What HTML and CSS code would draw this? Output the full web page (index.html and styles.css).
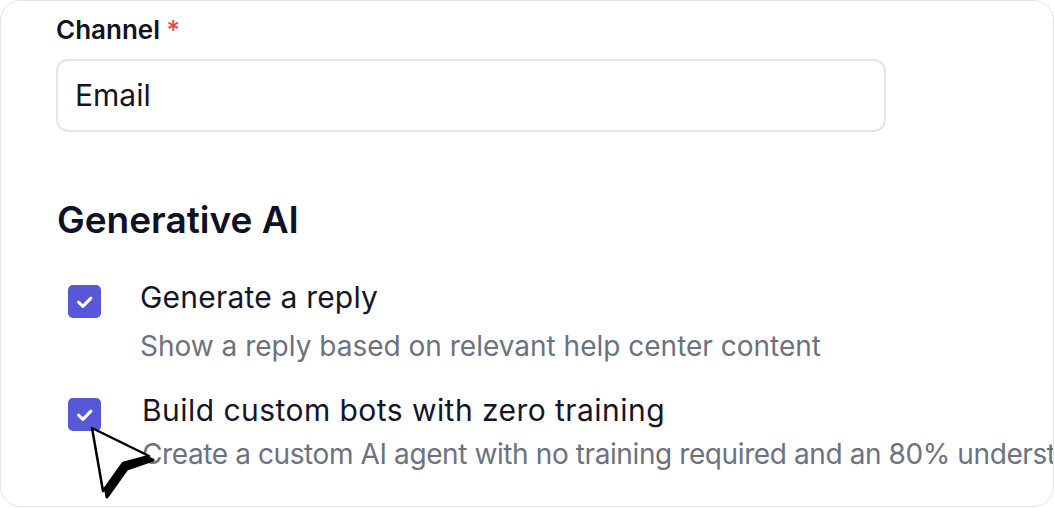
FILE: index.html
```html
<!DOCTYPE html>
<html>
<head>
<meta charset="utf-8">
<link rel="stylesheet" href="styles.css">
</head>
<body>
<div class="card">
  <div class="field">
    <div class="label">Channel <span class="req">*</span></div>
    <div class="input">Email</div>
  </div>
  <h2 class="section">Generative AI</h2>
  <div class="option">
    <span class="check"><svg viewBox="0 0 33 33" width="33" height="33"><path d="M10.5 17.2l4.4 4.2 8-8.3" fill="none" stroke="#fff" stroke-width="3" stroke-linecap="round" stroke-linejoin="round"/></svg></span>
    <div class="text">
      <div class="title">Generate a reply</div>
      <div class="desc">Show a reply based on relevant help center content</div>
    </div>
  </div>
  <div class="option second">
    <span class="check"><svg viewBox="0 0 33 33" width="33" height="33"><path d="M10.5 17.2l4.4 4.2 8-8.3" fill="none" stroke="#fff" stroke-width="3" stroke-linecap="round" stroke-linejoin="round"/></svg></span>
    <div class="text">
      <div class="title">Build custom bots with zero training</div>
      <div class="desc">Create a custom AI agent with no training required and an 80% understanding rate</div>
    </div>
  </div>
  <svg class="cursor" viewBox="0 0 72 76" width="72" height="76">
    <path d="M5 5 L64 34 L38 43 L18 71 Z" fill="#000" transform="translate(2,3)" stroke="#000" stroke-width="3" stroke-linejoin="round"/>
    <path d="M5 5 L62 33 L36 40 L16 68 Z" fill="#fff" stroke="#000" stroke-width="2.5" stroke-linejoin="round"/>
  </svg>
</div>
</body>
</html>
```
FILE: styles.css
```css
html, body {
  margin: 0;
  padding: 0;
  background: #fff;
}
body {
  font-family: Inter, "Noto Sans", sans-serif;
  color: #111225;
}
.card {
  box-sizing: border-box;
  width: 1054px;
  height: 507px;
  border: 1px solid #e3e4e8;
  border-radius: 20px;
  padding: 12px 0 0 55px;
  overflow: hidden;
  position: relative;
}
.label {
  font-size: 26px;
  font-weight: 600;
  line-height: 34px;
  color: #12131f;
}
.req {
  color: #e5484d;
  font-weight: 500;
}
.input {
  box-sizing: border-box;
  margin-top: 12px;
  width: 830px;
  height: 73px;
  border: 2px solid #e3e5e8;
  border-radius: 12px;
  padding: 0 0 0 17px;
  font-size: 30px;
  line-height: 69px;
  color: #14151f;
}
.section {
  margin: 66px 0 0 1px;
  font-size: 37px;
  font-weight: 600;
  line-height: 44px;
  color: #101124;
}
.option {
  display: flex;
  margin-top: 37px;
  margin-left: 12px;
}
.option.second {
  margin-top: 29px;
}
.check {
  flex: none;
  width: 33px;
  height: 33px;
  border-radius: 5px;
  background: #5658d8;
  margin-top: 6px;
}
.check svg {
  display: block;
}
.text {
  margin-left: 39px;
  white-space: nowrap;
}
.second .text {
  margin-left: 41px;
}
.title {
  font-size: 30px;
  line-height: 36px;
  letter-spacing: 0.2px;
  color: #14152a;
}
.second .title {
  letter-spacing: 0.45px;
}
.desc {
  margin-top: 14px;
  font-size: 28px;
  line-height: 34px;
  color: #6b7280;
}
.second .desc {
  margin-top: 9px;
  letter-spacing: -0.4px;
}
.cursor {
  position: absolute;
  left: 86px;
  top: 422px;
}
```
